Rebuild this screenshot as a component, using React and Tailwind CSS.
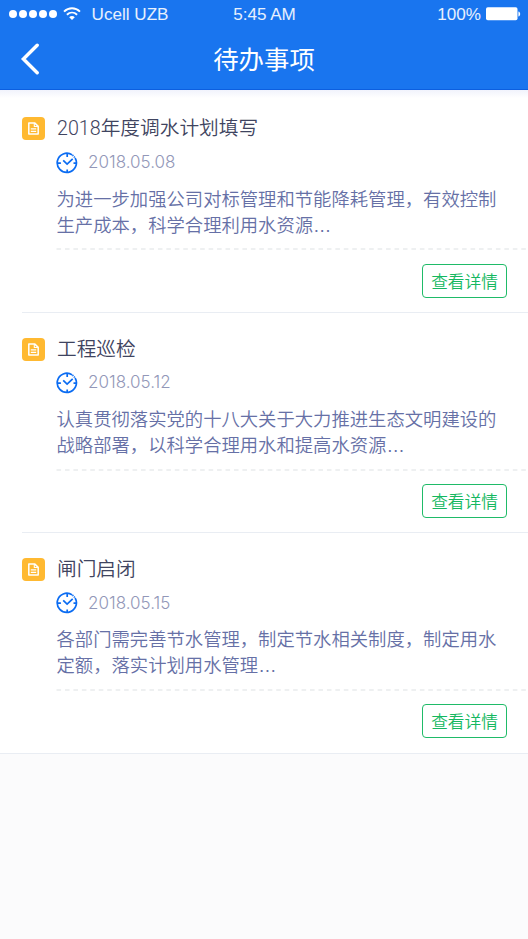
const TODOS = [
  {
    id: 1,
    title: '2018年度调水计划填写',
    date: '2018.05.08',
    lines: ['为进一步加强公司对标管理和节能降耗管理，有效控制', '生产成本，科学合理利用水资源'],
  },
  {
    id: 2,
    title: '工程巡检',
    date: '2018.05.12',
    lines: ['认真贯彻落实党的十八大关于大力推进生态文明建设的', '战略部署，以科学合理用水和提高水资源'],
  },
  {
    id: 3,
    title: '闸门启闭',
    date: '2018.05.15',
    lines: ['各部门需完善节水管理，制定节水相关制度，制定用水', '定额，落实计划用水管理'],
  },
]

function WifiIcon() {
  return (
    <svg width="18" height="14" viewBox="0 0 18 14" fill="none" stroke="#fff" strokeWidth="1.9">
      <path d="M1 4.7C5.6 0.1 12.4 0.1 17 4.7" />
      <path d="M3.9 7.8c3-2.9 7.2-2.9 10.2 0" />
      <path d="M9 13L6.2 10.2c1.6-1.5 4-1.5 5.6 0z" fill="#fff" stroke="none" />
    </svg>
  )
}

function BatteryIcon() {
  return (
    <svg width="35" height="14" viewBox="0 0 35 14" fill="#fff">
      <rect x="0" y="0.3" width="31.5" height="13" rx="1.8" />
      <path d="M32.4 4.4c2.4 0.6 2.4 4.4 0 5z" />
    </svg>
  )
}

function NoteIcon() {
  return (
    <span className="flex size-[23px] items-center justify-center rounded-[4px] bg-[#ffb931]">
      <svg width="11" height="13" viewBox="0 0 11 13" fill="none" stroke="#fff" strokeWidth="1.5" strokeLinejoin="round">
        <path d="M0.8 0.9h5.8L10.2 4.4v7.6H0.8z" />
        <path d="M6.3 1v3.5h3.6" strokeWidth="1.1" />
        <path d="M2.8 6.8h5.4M2.8 9.3h5.4" strokeWidth="1.2" />
      </svg>
    </span>
  )
}

function ClockIcon() {
  return (
    <svg width="22" height="22" viewBox="0 0 22 22" fill="none" stroke="#0b6cf2" strokeWidth="1.7">
      <path d="M16.2 2.9A9.6 9.6 0 1 0 19.1 6" />
      <path d="M16.5 3.1l2.6 2.8" strokeDasharray="1.2 0.9" />
      <path d="M11.2 1.5v3.4M11.2 17.5v3.4M1.5 11.2h3.4M17.5 11.2h3.4" />
      <path d="M7.2 8.4l3.9 3.7 5.6-5.3" />
    </svg>
  )
}

function StatusBar() {
  return (
    <div className="grid h-[28px] grid-cols-3 items-center pr-[7px] pl-[9px] font-['Liberation_Sans',sans-serif] text-[17.1px] leading-none text-white/90">
      <div className="flex items-center">
        <div className="flex gap-[1.9px]">
          {[0, 1, 2, 3, 4].map((i) => (
            <span key={i} className="size-[8px] rounded-full bg-white" />
          ))}
        </div>
        <span className="ml-[6px]"><WifiIcon /></span>
        <span className="mt-[2px] ml-[11px] whitespace-nowrap">Ucell UZB</span>
      </div>
      <span className="pt-[2px] pr-[1px] text-center">5:45 AM</span>
      <div className="flex items-center justify-end gap-[5px]">
        <span className="mt-[2px]">100%</span>
        <BatteryIcon />
      </div>
    </div>
  )
}

function TodoCard({ todo, last }) {
  return (
    <article className="h-[220.33px]">
      <div className={`flex h-full flex-col border-b border-[#e9edf3] pt-[24px] ${last ? 'pl-[21.5px]' : 'ml-[21.5px]'}`}>
        <div className="flex h-[24px] items-center">
          <NoteIcon />
          <h2 className="mt-[1px] ml-[12.5px] font-['Roboto','Noto_Sans_CJK_SC',sans-serif] text-[19.7px] leading-[24px] font-[350] text-[#3f4460]">
            {todo.title}
          </h2>
        </div>
        <div className="flex grow flex-col pl-[34.5px]">
          <div className="mt-[11px] flex h-[22px] items-center">
            <ClockIcon />
            <time className="ml-[10px] font-['Inter',sans-serif] text-[17px] font-light text-[#9297b8]">{todo.date}</time>
          </div>
          <p className="mt-[11px] ml-[0.5px] h-[52px] text-[18.33px] leading-[26px] font-[350] whitespace-nowrap text-[#6670a6]">
            {todo.lines[0]}
            <br />
            {todo.lines[1]}
            <span className="font-['Liberation_Sans',sans-serif] leading-none">…</span>
          </p>
          <svg className="mt-[11.5px]" width="472" height="2">
            <path d="M0.5 1h471" stroke="#e9ebed" strokeWidth="1.5" strokeDasharray="4.6 3.85" />
          </svg>
          <button className="mt-[13.5px] mr-[21px] h-[34px] w-[85px] self-end rounded-[4px] border border-[#1fbb68] text-[16.7px] leading-[32px] font-[350] text-[#14b860]">
            查看详情
          </button>
        </div>
      </div>
    </article>
  )
}

export default function App() {
  return (
    <div className="h-[939px] w-[528px] overflow-hidden bg-[#fbfbfc] font-['Noto_Sans_CJK_SC',sans-serif]">
      <header className="h-[90px] border-b border-[#0c5fe0] bg-[#1975ef]">
        <StatusBar />
        <div className="grid h-[61px] grid-cols-3 items-center">
          <svg className="ml-[20px]" width="20" height="32" viewBox="0 0 20 32" fill="none" stroke="#fff" strokeWidth="3.4" strokeLinecap="round" strokeLinejoin="miter">
            <path d="M17.2 2.2L3.4 16l13.8 13.8" />
          </svg>
          <h1 className="text-center text-[25.4px] leading-none font-normal text-white">待办事项</h1>
        </div>
      </header>
      <main className="bg-linear-to-b from-[#f1f3fc] to-white to-[8px] pt-[2.8px]">
        {TODOS.map((todo, i) => (
          <TodoCard key={todo.id} todo={todo} last={i === TODOS.length - 1} />
        ))}
      </main>
    </div>
  )
}
